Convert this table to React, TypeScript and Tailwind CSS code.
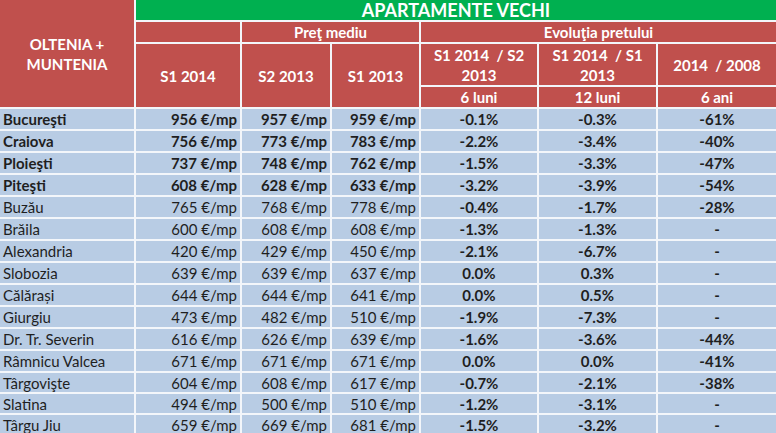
import React from "react";

interface CityRow {
  name: string;
  s1_2014: string;
  s2_2013: string;
  s1_2013: string;
  m6: string;
  m12: string;
  y6: string;
  bold?: boolean;
}

const rows: CityRow[] = [
  { name: "Bucureşti", s1_2014: "956", s2_2013: "957", s1_2013: "959", m6: "-0.1%", m12: "-0.3%", y6: "-61%", bold: true },
  { name: "Craiova", s1_2014: "756", s2_2013: "773", s1_2013: "783", m6: "-2.2%", m12: "-3.4%", y6: "-40%", bold: true },
  { name: "Ploieşti", s1_2014: "737", s2_2013: "748", s1_2013: "762", m6: "-1.5%", m12: "-3.3%", y6: "-47%", bold: true },
  { name: "Piteşti", s1_2014: "608", s2_2013: "628", s1_2013: "633", m6: "-3.2%", m12: "-3.9%", y6: "-54%", bold: true },
  { name: "Buzău", s1_2014: "765", s2_2013: "768", s1_2013: "778", m6: "-0.4%", m12: "-1.7%", y6: "-28%" },
  { name: "Brăila", s1_2014: "600", s2_2013: "608", s1_2013: "608", m6: "-1.3%", m12: "-1.3%", y6: "-" },
  { name: "Alexandria", s1_2014: "420", s2_2013: "429", s1_2013: "450", m6: "-2.1%", m12: "-6.7%", y6: "-" },
  { name: "Slobozia", s1_2014: "639", s2_2013: "639", s1_2013: "637", m6: "0.0%", m12: "0.3%", y6: "-" },
  { name: "Călărași", s1_2014: "644", s2_2013: "644", s1_2013: "641", m6: "0.0%", m12: "0.5%", y6: "-" },
  { name: "Giurgiu", s1_2014: "473", s2_2013: "482", s1_2013: "510", m6: "-1.9%", m12: "-7.3%", y6: "-" },
  { name: "Dr. Tr. Severin", s1_2014: "616", s2_2013: "626", s1_2013: "639", m6: "-1.6%", m12: "-3.6%", y6: "-44%" },
  { name: "Râmnicu Valcea", s1_2014: "671", s2_2013: "671", s1_2013: "671", m6: "0.0%", m12: "0.0%", y6: "-41%" },
  { name: "Târgovişte", s1_2014: "604", s2_2013: "608", s1_2013: "617", m6: "-0.7%", m12: "-2.1%", y6: "-38%" },
  { name: "Slatina", s1_2014: "494", s2_2013: "500", s1_2013: "510", m6: "-1.2%", m12: "-3.1%", y6: "-" },
  { name: "Târgu Jiu", s1_2014: "659", s2_2013: "669", s1_2013: "681", m6: "-1.5%", m12: "-3.2%", y6: "-" },
];

const red = "bg-[#c0504d] text-white font-bold flex items-center justify-center text-center";
const blue = "bg-[#b8cce4] text-[#1f1f1f] flex items-center";

const App: React.FC = () => {
  return (
    <div
      className="w-[776px] h-[433px] overflow-hidden bg-white text-[15px] leading-[20px]"
      style={{ fontFamily: "Lato, 'Open Sans', sans-serif" }}
    >
      <div className="grid grid-cols-[134px_104px_88px_87px_116px_117px_118px] grid-rows-[20px_20px_41px_20px_repeat(12,20px)_19px_19px_20px] gap-[2px] bg-[#f3f6fa]">
        {/* header */}
        <div className={`${red} row-span-4 col-start-1 row-start-1`}>
          OLTENIA +<br />MUNTENIA
        </div>
        <div className="col-span-6 bg-[#00b050] text-white font-bold text-[18px] flex items-center justify-center">
          APARTAMENTE VECHI
        </div>
        <div className={red}></div>
        <div className={`${red} col-span-2`}>Preţ mediu</div>
        <div className={`${red} col-span-3`}>Evoluţia pretului</div>
        <div className={`${red} row-span-2`}>S1 2014</div>
        <div className={`${red} row-span-2`}>S2 2013</div>
        <div className={`${red} row-span-2`}>S1 2013</div>
        <div className={`${red} whitespace-pre`}>{"S1 2014  / S2\n2013"}</div>
        <div className={`${red} whitespace-pre`}>{"S1 2014  / S1\n2013"}</div>
        <div className={`${red} whitespace-pre`}>{"2014  / 2008"}</div>
        <div className={red}>6 luni</div>
        <div className={red}>12 luni</div>
        <div className={red}>6 ani</div>

        {/* data */}
        {rows.map((r) => (
          <React.Fragment key={r.name}>
            <div className={`${blue} pl-[3px] ${r.bold ? "font-bold" : ""}`}>{r.name}</div>
            <div className={`${blue} justify-end pr-[3px] ${r.bold ? "font-bold" : ""}`}>{r.s1_2014} €/mp</div>
            <div className={`${blue} justify-end pr-[3px] ${r.bold ? "font-bold" : ""}`}>{r.s2_2013} €/mp</div>
            <div className={`${blue} justify-end pr-[3px] ${r.bold ? "font-bold" : ""}`}>{r.s1_2013} €/mp</div>
            <div className={`${blue} justify-center font-bold`}>{r.m6}</div>
            <div className={`${blue} justify-center font-bold`}>{r.m12}</div>
            <div className={`${blue} justify-center font-bold`}>{r.y6}</div>
          </React.Fragment>
        ))}
      </div>
    </div>
  );
};

export default App;
